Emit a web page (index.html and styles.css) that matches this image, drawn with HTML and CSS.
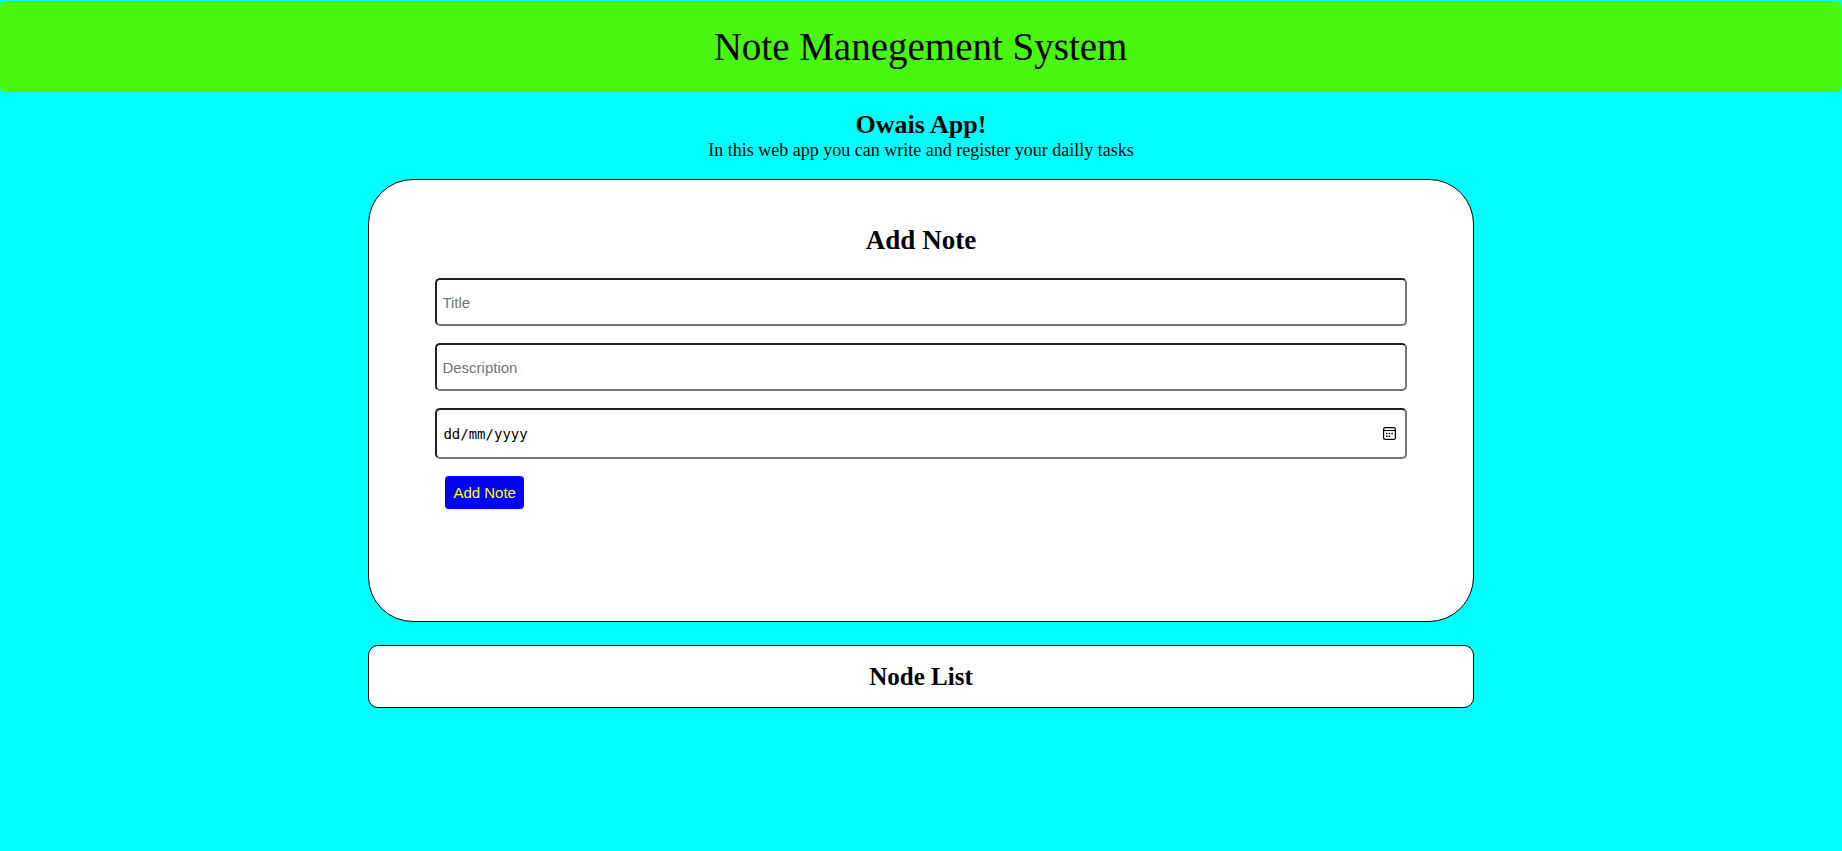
FILE: index.html
```html
<!DOCTYPE html>
<html lang="en-GB">
<head>
<meta charset="utf-8">
<title>Note Manegement System</title>
<link rel="stylesheet" href="styles.css">
</head>
<body>
<header class="banner">Note Manegement System</header>
<main>
<section class="intro">
<h1 class="intro-title">Owais App!</h1>
<p class="tagline">In this web app you can write and register your dailly tasks</p>
</section>
<section class="card form-card">
<h2 class="form-title">Add Note</h2>
<form class="note-form">
<input class="field" type="text" placeholder="Title" aria-label="Title">
<input class="field" type="text" placeholder="Description" aria-label="Description">
<div class="field date-field">
<input class="date-input" type="text" inputmode="numeric" placeholder="dd/mm/yyyy" aria-label="Date">
<button class="picker-button" type="button" aria-label="Show date picker">
<svg class="picker-icon" width="13" height="13" viewBox="0 0 13 13" fill="none" stroke="#000">
<rect x="0.6" y="0.6" width="11.8" height="11.8" rx="1.6" stroke-width="1.2"/>
<path d="M1 3.5H12"/>
<path d="M3 6.5h1.5M5.7 6.5h1.5M8.4 6.5h1.5M3 9.2h1.5M5.7 9.2h1.5" stroke-width="1.5"/>
</svg>
</button>
</div>
<button class="add-button" type="button">Add Note</button>
</form>
</section>
<section class="card list-card">
<h2 class="list-title">Node List</h2>
</section>
</main>
</body>
</html>
```

FILE: styles.css
```css
* {
  margin: 0;
  padding: 0;
  box-sizing: border-box;
}

body {
  background: #00ffff;
  font-family: "Liberation Serif", "Times New Roman", serif;
  color: #000;
}

.banner {
  margin: 1px 1px 0 0;
  padding: 23px 0 22px;
  border-radius: 5px;
  background: #48f610;
  font-size: 39px;
  line-height: 46px;
  text-align: center;
}

.intro {
  margin: 18px 0;
  text-align: center;
}

.intro-title,
.form-title,
.list-title {
  line-height: 30px;
  text-align: center;
}

.intro-title {
  font-size: 26px;
}

.form-title {
  font-size: 27px;
}

.list-title {
  font-size: 25px;
}

.tagline {
  font-size: 18px;
  line-height: 21px;
}

.card {
  width: 60%;
  margin: 0 auto 23px;
  border: 1px solid #000;
  background: #fff;
}

.form-card {
  padding: 45px 66px 112px;
  border-radius: 45px;
}

.list-card {
  padding: 16px 0 15px;
  border-radius: 10px;
}

.note-form {
  display: flex;
  flex-direction: column;
  align-items: flex-start;
  gap: 17px;
  margin-top: 23px;
}

.field {
  width: 100%;
  height: 48px;
  padding: 5px;
  border: 2px solid;
  border-color: #212124 #767676 #767676 #212124;
  border-radius: 5px;
  background: #fff;
  font-family: "Liberation Sans", Arial, sans-serif;
  font-size: 15px;
}

.date-field {
  display: flex;
  align-items: center;
  height: 51px;
  padding: 5px 9px 5px 6px;
}

.date-input {
  flex: 1;
  border: 0;
  background: transparent;
  font-family: "DejaVu Sans Mono", monospace;
  font-size: 14px;
}

.date-input::placeholder {
  color: #000;
}

.picker-button {
  display: flex;
  border: 0;
  background: transparent;
}

.add-button {
  margin-left: 10px;
  padding: 8px;
  border: 0;
  border-radius: 4px;
  background: #0000ff;
  color: #ffff00;
  font-family: "Liberation Sans", Arial, sans-serif;
  font-size: 15px;
  line-height: 17px;
}
```
